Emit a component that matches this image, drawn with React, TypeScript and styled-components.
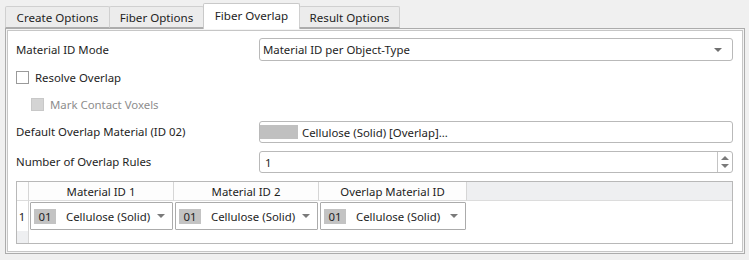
import React from "react";
import styled, { createGlobalStyle } from "styled-components";

const GlobalStyle = createGlobalStyle`
  html, body {
    margin: 0;
    padding: 0;
    background: #f0f0f0;
  }
  body {
    font-family: "Noto Sans", "Open Sans", sans-serif;
    font-size: 11.4px;
    color: #1e1e1e;
  }
`;

const Window = styled.div`
  width: 749px;
  height: 260px;
  box-sizing: border-box;
  padding: 3px 4px 0 5px;
`;

const TabBar = styled.div`
  display: flex;
  align-items: flex-end;
  height: 25px;
  position: relative;
  z-index: 1;
`;

const Tab = styled.div<{ $w: number; $active?: boolean }>`
  width: ${(p) => p.$w}px;
  height: ${(p) => (p.$active ? 26 : 22)}px;
  margin-bottom: ${(p) => (p.$active ? -1 : 0)}px;
  margin-right: -1px;
  box-sizing: border-box;
  display: flex;
  align-items: center;
  justify-content: center;
  padding-bottom: ${(p) => (p.$active ? 2 : 0)}px;
  border: 1px solid ${(p) => (p.$active ? "#c9c9c9" : "#d0d0d0")};
  border-bottom: ${(p) => (p.$active ? "none" : "1px solid #adadad")};
  border-radius: 2px 2px 0 0;
  background: ${(p) => (p.$active ? "#ffffff" : "#ececec")};
  color: #1e1e1e;
  font-size: 11.6px;
  white-space: nowrap;
`;

const Panel = styled.div`
  width: 740px;
  height: 226px;
  box-sizing: border-box;
  border: 1px solid #acacac;
  box-shadow: inset 0 0 0 1px #f4f4f4, inset 0 0 0 2px #c6c6c6;
  background: #ffffff;
  padding: 9px 11px 0 10px;
`;

const Row = styled.div<{ $h: number; $mt?: number }>`
  display: grid;
  grid-template-columns: 243px 1fr;
  align-items: center;
  height: ${(p) => p.$h}px;
  margin-top: ${(p) => p.$mt ?? 0}px;
`;

const Label = styled.span`
  line-height: 16px;
`;

const CheckRow = styled.label<{ $indent?: number; $disabled?: boolean }>`
  display: flex;
  align-items: center;
  gap: 6px;
  padding-left: ${(p) => p.$indent ?? 0}px;
  color: ${(p) => (p.$disabled ? "#8d8d8d" : "#1e1e1e")};
`;

const Box = styled.span<{ $disabled?: boolean }>`
  width: 13px;
  height: 13px;
  box-sizing: border-box;
  border: 1px solid ${(p) => (p.$disabled ? "#c8c8c8" : "#9a9a9a")};
  background: ${(p) => (p.$disabled ? "#d4d4d4" : "#ffffff")};
`;

const Field = styled.div<{ $h: number }>`
  height: ${(p) => p.$h}px;
  box-sizing: border-box;
  border: 1px solid #b9b9b9;
  border-radius: 3px;
  background: #ffffff;
  display: flex;
  align-items: center;
`;

const FieldText = styled.span<{ $pl: number }>`
  flex: 1;
  padding-left: ${(p) => p.$pl}px;
  white-space: nowrap;
`;

const Swatch = styled.span`
  width: 38px;
  height: 14px;
  background: #c0c0c0;
`;

const SpinButtons = styled.div`
  width: 14px;
  align-self: stretch;
  border-left: 1px solid #c4c4c4;
  display: flex;
  flex-direction: column;
  align-items: center;
  justify-content: center;
  gap: 4px;
`;

const Arrow = ({ up, color = "#707070" }: { up?: boolean; color?: string }) => (
  <svg width="8" height="4" viewBox="0 0 8 4">
    <path d={up ? "M0 4 L4 0 L8 4 Z" : "M0 0 L8 0 L4 4 Z"} fill={color} />
  </svg>
);

const ArrowSlot = styled.span<{ $w: number }>`
  width: ${(p) => p.$w}px;
  display: flex;
  justify-content: center;
  align-items: center;
`;

const Table = styled.div`
  margin-top: 8px;
  height: 63px;
  box-sizing: border-box;
  border: 1px solid #b8b8b8;
  display: grid;
  grid-template-columns: 12px 145px 145px 148px 1fr;
  grid-template-rows: 19px 30px 1fr;
`;

const HeadCell = styled.div<{ $filler?: boolean }>`
  background: ${(p) => (p.$filler ? "#eeeff1" : "#fdfdfd")};
  border-right: ${(p) => (p.$filler ? "none" : "1px solid #d6d6d6")};
  border-bottom: 1px solid #dcdcdc;
  display: flex;
  align-items: center;
  justify-content: center;
  white-space: nowrap;
  color: #1e1e1e;
`;

const RowHead = styled.div<{ $gray?: boolean }>`
  background: ${(p) => (p.$gray ? "#eeeff1" : "#ffffff")};
  border-right: 1px solid #d6d6d6;
  display: flex;
  align-items: center;
  justify-content: center;
  padding-right: 1px;
`;

const Cell = styled.div`
  padding: 1px 1px 0 1px;
  display: flex;
`;

const CellCombo = styled.div`
  flex: 1;
  height: 28px;
  box-sizing: border-box;
  border: 1px solid #ababab;
  border-radius: 1px;
  background: #ffffff;
  display: flex;
  align-items: center;
  padding-left: 3px;
`;

const Badge = styled.span`
  width: 22px;
  height: 15px;
  background: #c3c3c3;
  display: flex;
  align-items: center;
  justify-content: center;
  line-height: 15px;
`;

const CellText = styled.span`
  flex: 1;
  padding-left: 10px;
  white-space: nowrap;
`;

const Blank = styled.div``;

const MaterialCombo = () => (
  <Cell>
    <CellCombo>
      <Badge>01</Badge>
      <CellText>Cellulose (Solid)</CellText>
      <ArrowSlot $w={22}>
        <Arrow color="#7a7a7a" />
      </ArrowSlot>
    </CellCombo>
  </Cell>
);

const tabs = [
  { name: "Create Options", w: 105 },
  { name: "Fiber Options", w: 95 },
  { name: "Fiber Overlap", w: 97, active: true },
  { name: "Result Options", w: 101 },
];

export default function App() {
  return (
    <Window>
      <GlobalStyle />
      <TabBar>
        {tabs.map((t) => (
          <Tab key={t.name} $w={t.w} $active={t.active}>
            {t.name}
          </Tab>
        ))}
      </TabBar>
      <Panel>
        <Row $h={23}>
          <Label>Material ID Mode</Label>
          <Field $h={23}>
            <FieldText $pl={3}>Material ID per Object-Type</FieldText>
            <ArrowSlot $w={28}>
              <Arrow />
            </ArrowSlot>
          </Field>
        </Row>
        <Row $h={22} $mt={5}>
          <CheckRow>
            <Box />
            Resolve Overlap
          </CheckRow>
        </Row>
        <Row $h={22} $mt={5}>
          <CheckRow $indent={15} $disabled>
            <Box $disabled />
            Mark Contact Voxels
          </CheckRow>
        </Row>
        <Row $h={22} $mt={6}>
          <Label>Default Overlap Material (ID 02)</Label>
          <Field $h={22}>
            <Swatch />
            <FieldText $pl={4}>Cellulose (Solid) [Overlap]...</FieldText>
          </Field>
        </Row>
        <Row $h={22} $mt={8}>
          <Label>Number of Overlap Rules</Label>
          <Field $h={22}>
            <FieldText $pl={5}>1</FieldText>
            <SpinButtons>
              <Arrow up color="#7a7a7a" />
              <Arrow color="#7a7a7a" />
            </SpinButtons>
          </Field>
        </Row>
        <Table>
          <HeadCell />
          <HeadCell>Material ID 1</HeadCell>
          <HeadCell>Material ID 2</HeadCell>
          <HeadCell>Overlap Material ID</HeadCell>
          <HeadCell $filler />

          <RowHead>1</RowHead>
          <MaterialCombo />
          <MaterialCombo />
          <MaterialCombo />
          <Blank />

          <RowHead $gray />
          <Blank />
          <Blank />
          <Blank />
          <Blank />
        </Table>
      </Panel>
    </Window>
  );
}
